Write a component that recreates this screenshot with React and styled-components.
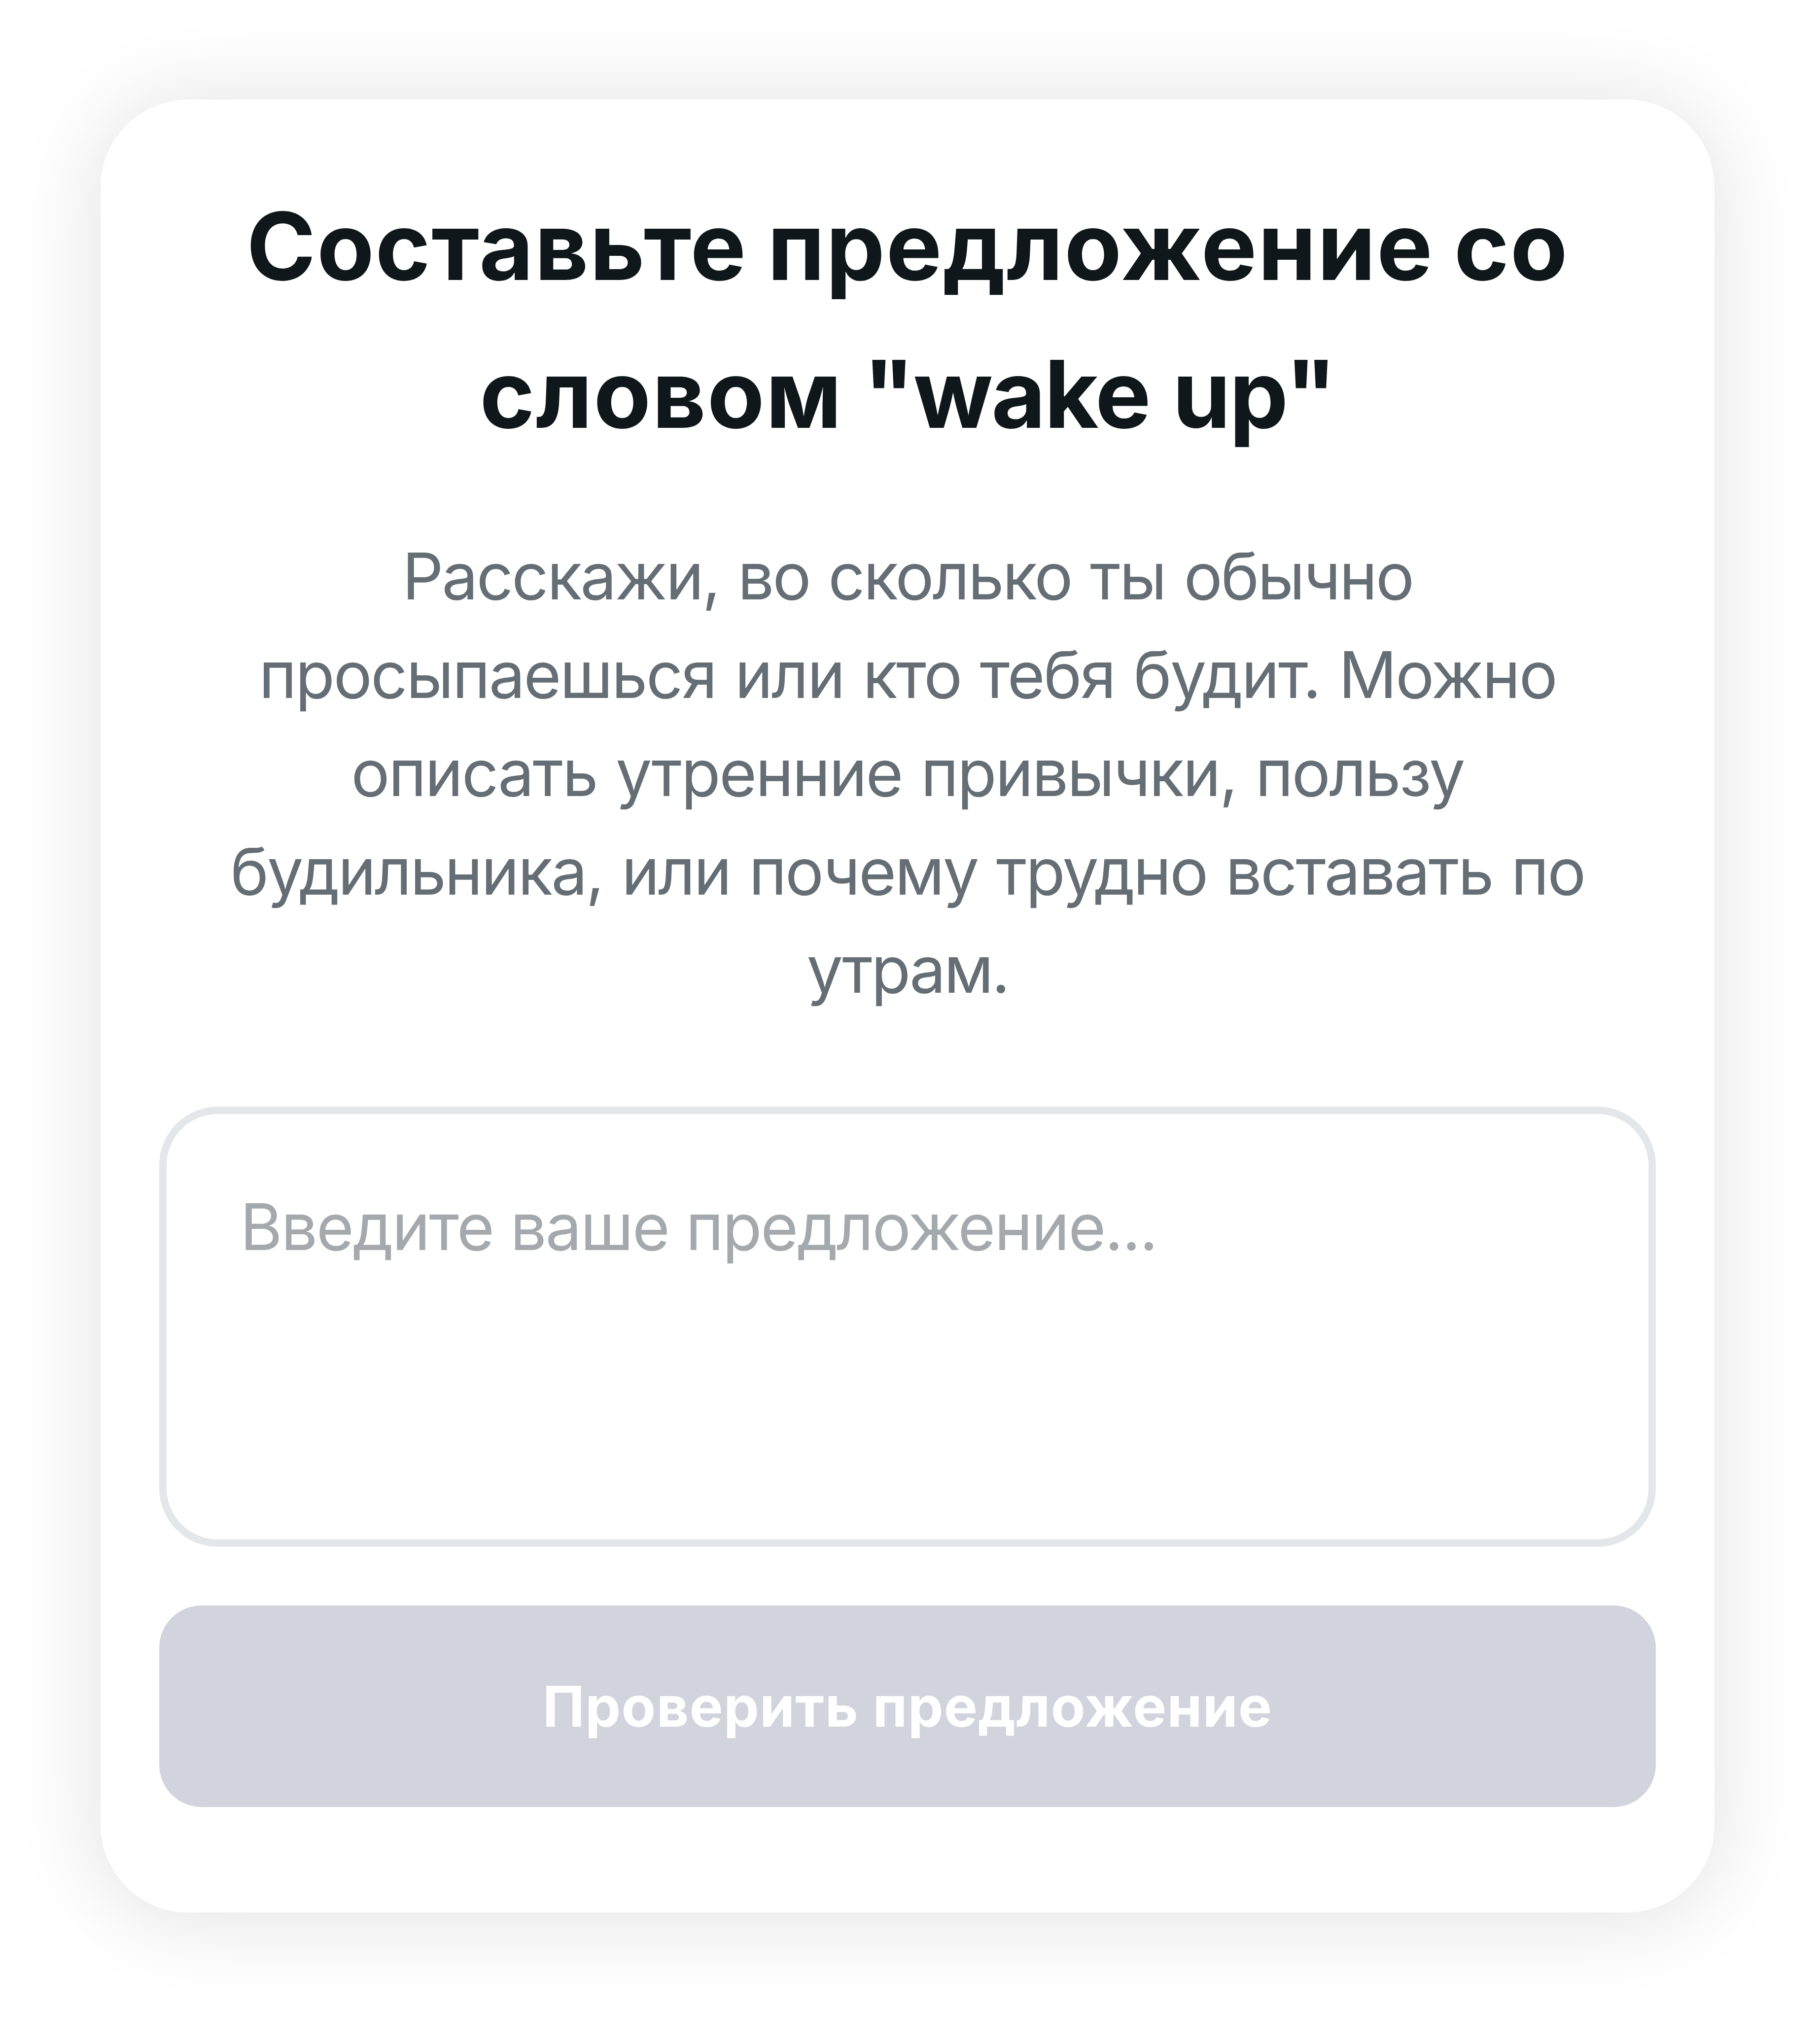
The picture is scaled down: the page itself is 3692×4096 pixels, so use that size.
import React, { useState } from 'react';
import styled, { createGlobalStyle } from 'styled-components';

const color = {
  text: '#0f171a',
  muted: '#656e74',
  placeholder: '#a3a9ad',
  border: '#e3e7ea',
  disabled: '#d1d4dc',
  white: '#ffffff',
};

const GlobalStyle = createGlobalStyle`
  * {
    box-sizing: border-box;
  }

  body {
    margin: 0;
    background: ${color.white};
    font-family: Inter, 'Liberation Sans', sans-serif;
  }
`;

const Page = styled.main`
  display: flex;
  justify-content: center;
  width: 3692px;
  height: 4096px;
  padding: 202px 214px 216px 204px;
  overflow: hidden;
`;

const Card = styled.section`
  display: flex;
  flex-direction: column;
  width: 100%;
  padding: 147px 119px 214px;
  border-radius: 178px;
  background: ${color.white};
  box-shadow: 0 7px 179px rgba(0, 0, 0, 0.125);
`;

const Title = styled.h1`
  margin: 0 0 120px;
  color: ${color.text};
  font-size: 190px;
  font-weight: 700;
  line-height: 300px;
  letter-spacing: 2.2px;
  word-spacing: -6px;
  text-align: center;
  white-space: nowrap;
`;

const Word = styled.span`
  letter-spacing: -2.8px;
  word-spacing: 4px;
`;

const Description = styled.p`
  margin: 0 0 178px;
  color: ${color.muted};
  font-size: 131px;
  line-height: 199.6px;
  text-align: center;
  white-space: nowrap;
  word-spacing: 4px;
`;

const Line = styled.span`
  display: block;
  letter-spacing: ${({ $tracking = -3.2 }) => $tracking}px;
`;

const SentenceInput = styled.textarea`
  display: block;
  width: 100%;
  height: 893px;
  padding: 150px 149px 148px;
  border: 15px solid ${color.border};
  border-radius: 119px;
  outline: none;
  background: ${color.white};
  color: ${color.text};
  font-family: inherit;
  font-size: 131px;
  line-height: 157px;
  letter-spacing: -2.5px;
  resize: none;
  overflow: hidden;

  &::placeholder {
    color: ${color.placeholder};
    opacity: 1;
  }
`;

const CheckButton = styled.button`
  height: 409px;
  margin-top: 119px;
  padding: 0;
  border: 0;
  border-radius: 86px;
  background: ${color.disabled};
  color: ${color.white};
  font-family: inherit;
  font-size: 114px;
  font-weight: 700;
  letter-spacing: 1.3px;
`;

const App = () => {
  const [sentence, setSentence] = useState('');

  return (
    <>
      <GlobalStyle />
      <Page>
        <Card>
          <Title>
            Составьте предложение со
            <br />
            словом <Word>"wake up"</Word>
          </Title>
          <Description>
            <Line $tracking={-3.3}>Расскажи, во сколько ты обычно</Line>
            <Line $tracking={-2.9}>просыпаешься или кто тебя будит. Можно</Line>
            <Line $tracking={-2.9}>описать утренние привычки, пользу</Line>
            <Line>будильника, или почему трудно вставать по</Line>
            <Line $tracking={-3.9}>утрам.</Line>
          </Description>
          <SentenceInput
            value={sentence}
            onChange={(e) => setSentence(e.target.value)}
            placeholder="Введите ваше предложение..."
          />
          <CheckButton type="button" disabled={!sentence.trim()}>
            Проверить предложение
          </CheckButton>
        </Card>
      </Page>
    </>
  );
};

export default App;
